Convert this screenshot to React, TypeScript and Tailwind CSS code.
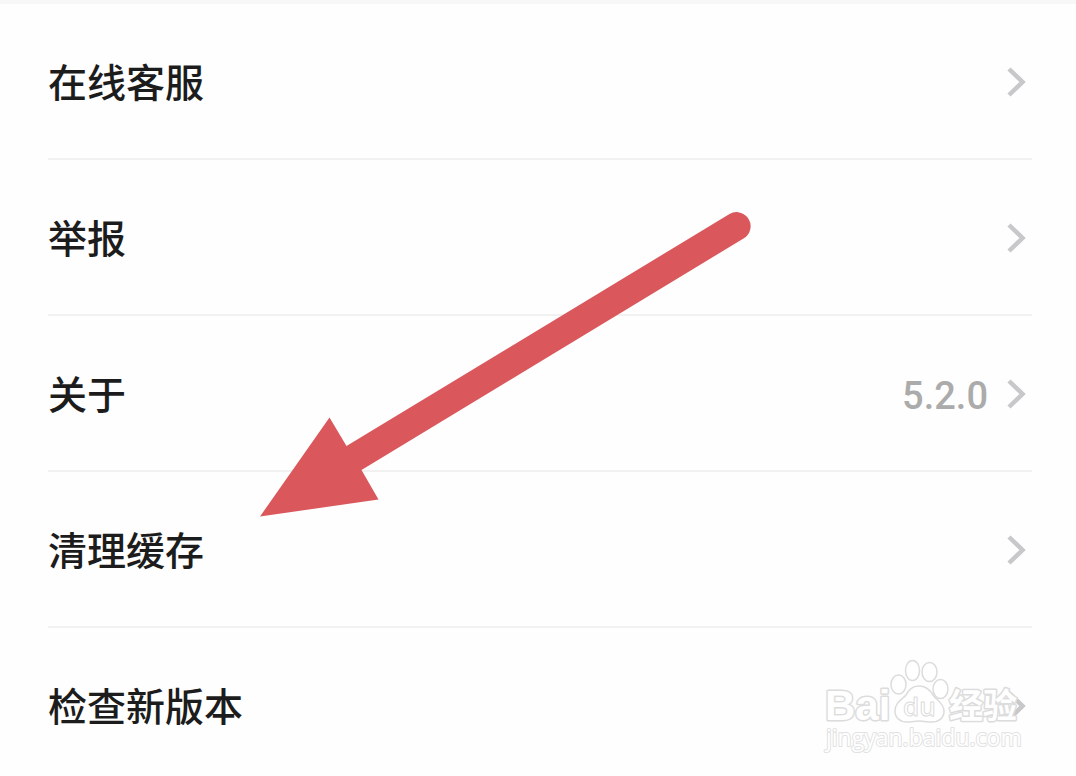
interface SettingItem {
  id: string
  label: string
  value?: string
}

const ITEMS: SettingItem[] = [
  { id: 'support', label: '在线客服' },
  { id: 'report', label: '举报' },
  { id: 'about', label: '关于', value: '5.2.0' },
  { id: 'cache', label: '清理缓存' },
  { id: 'update', label: '检查新版本' },
]

function Chevron() {
  return (
    <svg viewBox="0 0 20 32" className="h-8 w-5 shrink-0" fill="none" aria-hidden="true">
      <path d="M3 3 16.500 16 3 29" stroke="#c8c8ca" strokeWidth="4.500" />
    </svg>
  )
}

function SettingRow({ item }: { item: SettingItem }) {
  return (
    <li className="border-b-2 border-[#f1f1f1] last:border-b-0">
      <button type="button" className="flex h-[154px] w-full items-center gap-[18px] pt-0.5 pr-1.5 text-left">
        <span className="flex-1 pb-1 text-[39px] leading-14 font-medium text-[#1c1c1c]">{item.label}</span>
        {item.value && (
          <span className="pt-1 font-[Roboto,sans-serif] text-[38px] leading-12 font-medium text-[#ababab]">
            {item.value}
          </span>
        )}
        <Chevron />
      </button>
    </li>
  )
}

function PointerArrow() {
  return (
    <svg
      viewBox="260 212 491 305"
      className="pointer-events-none absolute top-[212px] left-[260px] h-[305px] w-[491px]"
      aria-hidden="true"
    >
      <path
        d="M260 516.500 329.500 417.500 346.500 446 729.500 214A14 14 0 0 1 743.500 238.500L361.500 470 378.500 499.500Z"
        fill="#da575c"
      />
    </svg>
  )
}

function Watermark() {
  return (
    <svg
      viewBox="0 0 220 100"
      className="pointer-events-none absolute right-[36px] bottom-[20px] h-[100px] w-[220px]"
      fill="#fff"
      stroke="#dcdcdc"
      strokeWidth="1.500"
      strokeLinejoin="round"
      role="img"
      aria-label="Baidu 经验"
    >
      {/* wordmark, outlined */}
      <g fontWeight="700" strokeWidth="3" paintOrder="stroke">
        <text x="5" y="64" fontSize="42" fontFamily="Liberation Sans, sans-serif">Bai</text>
        <text x="129" y="62" fontSize="34" fontFamily="Noto Sans CJK SC, sans-serif">经验</text>
      </g>
      {/* paw */}
      <ellipse cx="78.500" cy="28.500" rx="7.500" ry="9.500" />
      <ellipse cx="92.500" cy="14.500" rx="7" ry="10" />
      <ellipse cx="109.500" cy="16" rx="7.500" ry="9.500" />
      <ellipse cx="120.500" cy="33" rx="7.500" ry="9.500" />
      <path d="M99 30c-7 0-10 4-13 9-3 4-11 7-11 16 0 7 5 11 12 11 5 0 8-1 12-1s8 1 13 1c7 0 12-4 12-11 0-8-8-11-11-16-3-5-7-9-14-9Z" />
      <text x="83" y="60" fontSize="26" fontWeight="600" strokeWidth="1" fontFamily="Open Sans, sans-serif">du</text>
      <text x="6" y="90" fontSize="23" fontWeight="400" strokeWidth="2" stroke="#e2e2e2" paintOrder="stroke" fontFamily="Open Sans, sans-serif">
        jingyan.baidu.com
      </text>
    </svg>
  )
}

export default function App() {
  return (
    <main
      lang="zh-CN"
      className="relative h-screen overflow-hidden bg-[#fefefe] font-['Noto_Sans_CJK_SC',sans-serif]"
    >
      <div className="h-1 bg-[#f7f7f7]" />
      <ul className="mr-11 ml-12">
        {ITEMS.map(item => (
          <SettingRow key={item.id} item={item} />
        ))}
      </ul>
      <PointerArrow />
      <Watermark />
    </main>
  )
}
